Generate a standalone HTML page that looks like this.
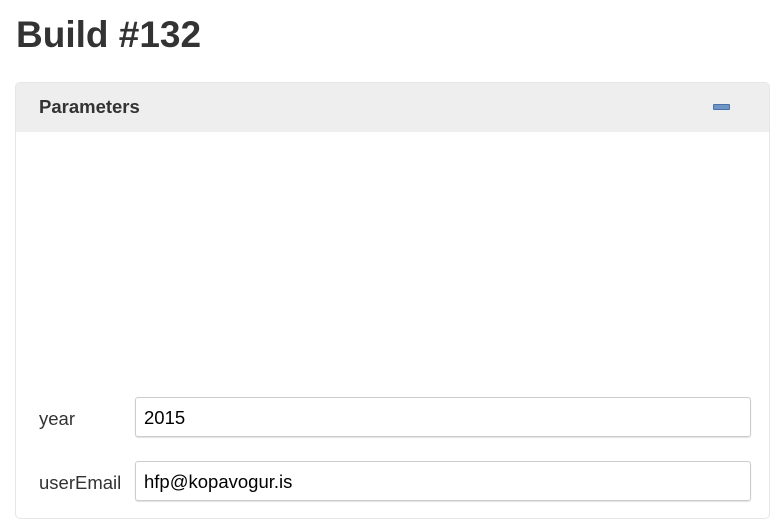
<!DOCTYPE html>
<html><head><meta charset="utf-8"><style>
body{margin:0;background:#fff;font-family:"Liberation Sans",Arial,sans-serif;color:#333;width:780px;height:527px;overflow:hidden;position:relative}
h1{position:absolute;left:16px;top:14px;margin:0;font-size:37px;font-weight:bold;line-height:42px;color:#333}
.panel{position:absolute;left:15px;top:82px;width:753px;height:435px;border:1px solid #e6e6e6;border-radius:5px;overflow:hidden}
.hd{height:49px;background:#eeeeee;position:relative}
.hd span{position:absolute;left:23px;top:13px;font-size:18.5px;font-weight:bold;color:#333}
.min{position:absolute;left:697px;top:21px;width:17px;height:6px;background:#6f95c4;border:1px solid #4a72a8;border-radius:1px;box-sizing:border-box}
.lbl{position:absolute;left:23px;font-size:18.5px;color:#333}
.in{position:absolute;left:119px;width:616px;height:40px;border:1px solid #ccc;border-radius:3px;box-sizing:border-box;box-shadow:0 1px 1px rgba(0,0,0,.12);font-size:18.5px;color:#000;padding:9px 0 0 8px}
</style></head><body>
<h1>Build #132</h1>
<div class="panel">
<div class="hd"><span>Parameters</span><div class="min"></div></div>
<div class="lbl" style="top:325px">year</div>
<div class="in" style="top:314px">2015</div>
<div class="lbl" style="top:389px">userEmail</div>
<div class="in" style="top:378px">hfp@kopavogur.is</div>
</div>
</body></html>
